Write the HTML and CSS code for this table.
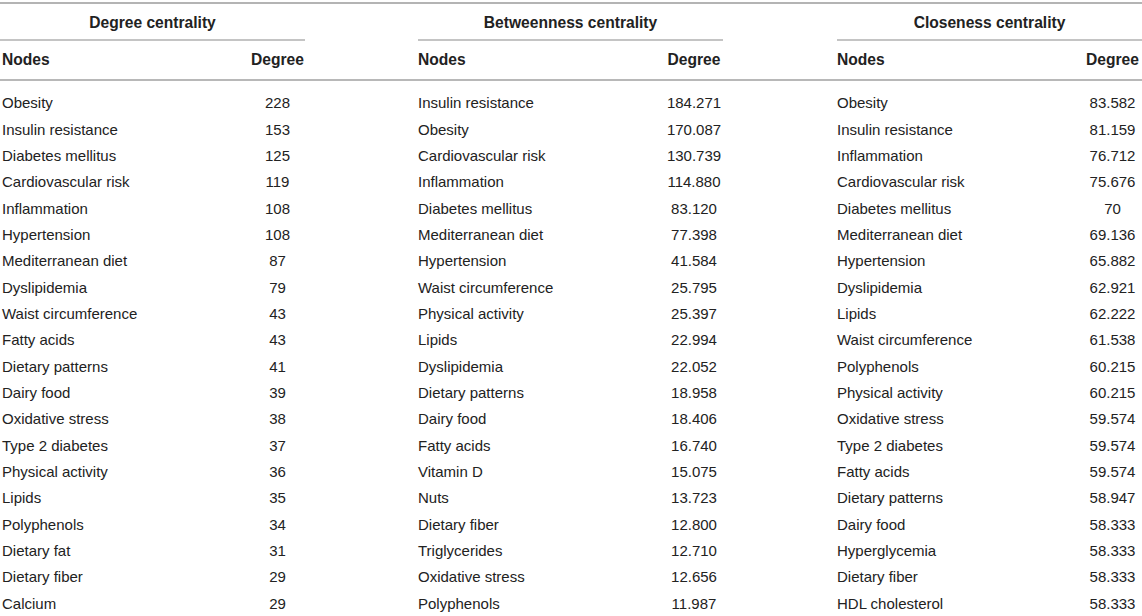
FILE: index.html
```html
<!DOCTYPE html>
<html lang="en">
<head>
<meta charset="utf-8">
<title>Centrality measures</title>
<link rel="stylesheet" href="styles.css">
</head>
<body>
<div class="tbl">
  <div class="row titles">
    <div class="gt">Degree centrality</div>
    <div class="sp"></div>
    <div class="gt">Betweenness centrality</div>
    <div class="sp"></div>
    <div class="gt">Closeness centrality</div>
  </div>
  <div class="row head">
    <div class="n first">Nodes</div><div class="v">Degree</div><div class="sp"></div>
    <div class="n">Nodes</div><div class="v">Degree</div><div class="sp"></div>
    <div class="n">Nodes</div><div class="v">Degree</div>
  </div>
  <div class="body">
    <div class="row"><div class="n first">Obesity</div><div class="v">228</div><div class="sp"></div><div class="n">Insulin resistance</div><div class="v">184.271</div><div class="sp"></div><div class="n">Obesity</div><div class="v">83.582</div></div>
    <div class="row"><div class="n first">Insulin resistance</div><div class="v">153</div><div class="sp"></div><div class="n">Obesity</div><div class="v">170.087</div><div class="sp"></div><div class="n">Insulin resistance</div><div class="v">81.159</div></div>
    <div class="row"><div class="n first">Diabetes mellitus</div><div class="v">125</div><div class="sp"></div><div class="n">Cardiovascular risk</div><div class="v">130.739</div><div class="sp"></div><div class="n">Inflammation</div><div class="v">76.712</div></div>
    <div class="row"><div class="n first">Cardiovascular risk</div><div class="v">119</div><div class="sp"></div><div class="n">Inflammation</div><div class="v">114.880</div><div class="sp"></div><div class="n">Cardiovascular risk</div><div class="v">75.676</div></div>
    <div class="row"><div class="n first">Inflammation</div><div class="v">108</div><div class="sp"></div><div class="n">Diabetes mellitus</div><div class="v">83.120</div><div class="sp"></div><div class="n">Diabetes mellitus</div><div class="v">70</div></div>
    <div class="row"><div class="n first">Hypertension</div><div class="v">108</div><div class="sp"></div><div class="n">Mediterranean diet</div><div class="v">77.398</div><div class="sp"></div><div class="n">Mediterranean diet</div><div class="v">69.136</div></div>
    <div class="row"><div class="n first">Mediterranean diet</div><div class="v">87</div><div class="sp"></div><div class="n">Hypertension</div><div class="v">41.584</div><div class="sp"></div><div class="n">Hypertension</div><div class="v">65.882</div></div>
    <div class="row"><div class="n first">Dyslipidemia</div><div class="v">79</div><div class="sp"></div><div class="n">Waist circumference</div><div class="v">25.795</div><div class="sp"></div><div class="n">Dyslipidemia</div><div class="v">62.921</div></div>
    <div class="row"><div class="n first">Waist circumference</div><div class="v">43</div><div class="sp"></div><div class="n">Physical activity</div><div class="v">25.397</div><div class="sp"></div><div class="n">Lipids</div><div class="v">62.222</div></div>
    <div class="row"><div class="n first">Fatty acids</div><div class="v">43</div><div class="sp"></div><div class="n">Lipids</div><div class="v">22.994</div><div class="sp"></div><div class="n">Waist circumference</div><div class="v">61.538</div></div>
    <div class="row"><div class="n first">Dietary patterns</div><div class="v">41</div><div class="sp"></div><div class="n">Dyslipidemia</div><div class="v">22.052</div><div class="sp"></div><div class="n">Polyphenols</div><div class="v">60.215</div></div>
    <div class="row"><div class="n first">Dairy food</div><div class="v">39</div><div class="sp"></div><div class="n">Dietary patterns</div><div class="v">18.958</div><div class="sp"></div><div class="n">Physical activity</div><div class="v">60.215</div></div>
    <div class="row"><div class="n first">Oxidative stress</div><div class="v">38</div><div class="sp"></div><div class="n">Dairy food</div><div class="v">18.406</div><div class="sp"></div><div class="n">Oxidative stress</div><div class="v">59.574</div></div>
    <div class="row"><div class="n first">Type 2 diabetes</div><div class="v">37</div><div class="sp"></div><div class="n">Fatty acids</div><div class="v">16.740</div><div class="sp"></div><div class="n">Type 2 diabetes</div><div class="v">59.574</div></div>
    <div class="row"><div class="n first">Physical activity</div><div class="v">36</div><div class="sp"></div><div class="n">Vitamin D</div><div class="v">15.075</div><div class="sp"></div><div class="n">Fatty acids</div><div class="v">59.574</div></div>
    <div class="row"><div class="n first">Lipids</div><div class="v">35</div><div class="sp"></div><div class="n">Nuts</div><div class="v">13.723</div><div class="sp"></div><div class="n">Dietary patterns</div><div class="v">58.947</div></div>
    <div class="row"><div class="n first">Polyphenols</div><div class="v">34</div><div class="sp"></div><div class="n">Dietary fiber</div><div class="v">12.800</div><div class="sp"></div><div class="n">Dairy food</div><div class="v">58.333</div></div>
    <div class="row"><div class="n first">Dietary fat</div><div class="v">31</div><div class="sp"></div><div class="n">Triglycerides</div><div class="v">12.710</div><div class="sp"></div><div class="n">Hyperglycemia</div><div class="v">58.333</div></div>
    <div class="row"><div class="n first">Dietary fiber</div><div class="v">29</div><div class="sp"></div><div class="n">Oxidative stress</div><div class="v">12.656</div><div class="sp"></div><div class="n">Dietary fiber</div><div class="v">58.333</div></div>
    <div class="row"><div class="n first">Calcium</div><div class="v">29</div><div class="sp"></div><div class="n">Polyphenols</div><div class="v">11.987</div><div class="sp"></div><div class="n">HDL cholesterol</div><div class="v">58.333</div></div>
  </div>
</div>
</body>
</html>
```

FILE: styles.css
```css
html, body {
  margin: 0;
  padding: 0;
  background: #ffffff;
}

body {
  font-family: "Liberation Sans", Arial, Helvetica, sans-serif;
  font-size: 15px;
  color: #222222;
  width: 1142px;
  height: 616px;
  overflow: hidden;
}

.tbl {
  margin-top: 2px;
  border-top: 2px solid #b4b4b4;
}

.row {
  display: grid;
  grid-template-columns: 250px 55px 113px 247px 58px 114px 246px 59px;
}

.titles .gt {
  grid-column: span 2;
  text-align: center;
  font-weight: bold;
  font-size: 15.6px;
  height: 35px;
  line-height: 37px;
  border-bottom: 2px solid #c4c4c4;
  white-space: nowrap;
}

.head {
  height: 38px;
  line-height: 38px;
  font-weight: bold;
  font-size: 15.6px;
  border-bottom: 2px solid #b8b8b8;
}

.body {
  padding-top: 9.3px;
}

.body .row {
  height: 26.34px;
  line-height: 26.34px;
}

.n {
  white-space: nowrap;
  text-align: left;
}

.n.first {
  padding-left: 2px;
}

.v {
  text-align: center;
  white-space: nowrap;
}
```
